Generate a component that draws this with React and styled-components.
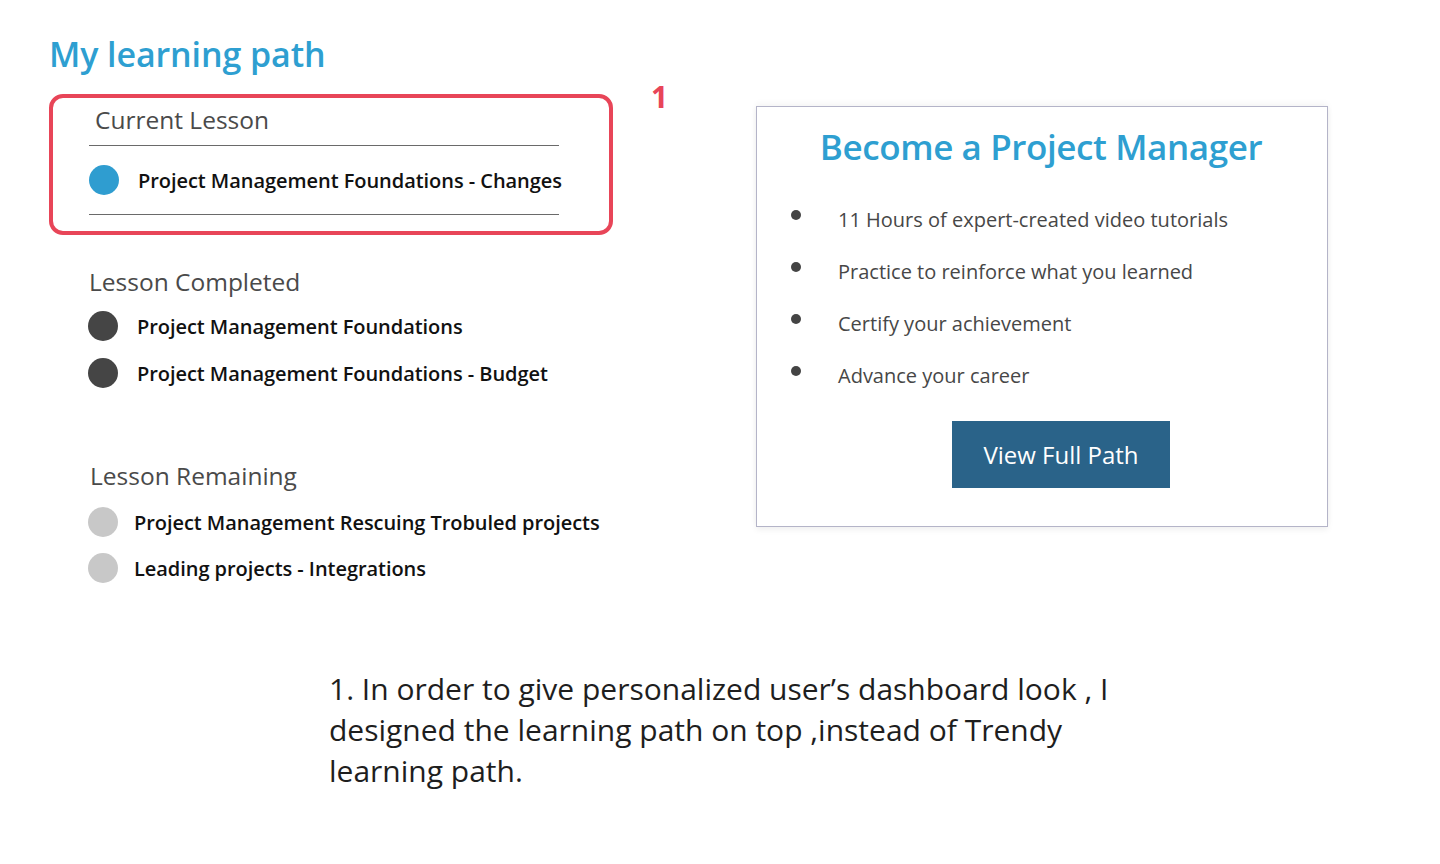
import styled, { createGlobalStyle } from "styled-components";

const GlobalStyle = createGlobalStyle`
  body {
    margin: 0;
    background: #fff;
    font-family: "Open Sans", "Noto Sans", sans-serif;
  }
`;

const Page = styled.div`
  width: 1440px;
  height: 864px;
  padding: 32px 0 0 49px;
  box-sizing: border-box;
`;

const MainRow = styled.div`
  display: flex;
  align-items: flex-start;
`;

const LeftColumn = styled.div`
  width: 564px;
  display: flex;
  flex-direction: column;
`;

const PageTitle = styled.h1`
  margin: 0;
  font-size: 34px;
  line-height: 44px;
  font-weight: 600;
  letter-spacing: -0.1px;
  color: #2e9fd1;
`;

const CurrentBox = styled.div`
  margin-top: 18px;
  border: 4px solid #e84558;
  border-radius: 14px;
  padding: 8px 0 16px 36px;
  display: flex;
  flex-direction: column;
`;

const SectionHeading = styled.h2`
  margin: 0;
  padding-left: ${(p) => p.$indent || 0}px;
  font-size: 24.5px;
  line-height: 28px;
  font-weight: 400;
  color: #4a4a4a;
`;

const Rule = styled.div`
  width: 470px;
  height: 1px;
  background: #6a6a6a;
  margin: ${(p) => p.$margin};
`;

const Section = styled.div`
  padding-left: 39px;
  display: flex;
  flex-direction: column;
  margin-top: ${(p) => p.$top}px;
`;

const LessonRow = styled.div`
  display: flex;
  align-items: center;
  height: 40px;
  gap: ${(p) => p.$gap || 19}px;
  margin-top: ${(p) => p.$top || 0}px;
`;

const Dot = styled.span`
  width: 30px;
  height: 30px;
  border-radius: 50%;
  flex: none;
  background: ${(p) =>
    p.$state === "current" ? "#2f9dd0" : p.$state === "done" ? "#454545" : "#c8c8c8"};
`;

const LessonName = styled.span`
  font-size: 20px;
  font-weight: 600;
  color: #111;
  letter-spacing: -0.05px;
`;

const Marker = styled.div`
  margin: 47px 0 0 38px;
  width: 16px;
  font-size: 30px;
  line-height: 36px;
  font-weight: 700;
  color: #e84558;
`;

const Card = styled.div`
  margin: 74px 0 0 89px;
  width: 572px;
  height: 421px;
  box-sizing: border-box;
  border: 1px solid #b4b4c8;
  box-shadow: 0 3px 6px rgba(0, 0, 0, 0.06), 0 -3px 6px rgba(0, 0, 0, 0.04);
  padding: 18px 0 0 34px;
  display: flex;
  flex-direction: column;
`;

const CardTitle = styled.h2`
  margin: 0 0 0 -36px;
  text-align: center;
  font-size: 35px;
  line-height: 44px;
  font-weight: 600;
  letter-spacing: -0.4px;
  color: #2e9fd1;
`;

const Perks = styled.ul`
  list-style: none;
  margin: 24px 0 0;
  padding: 0;
`;

const Perk = styled.li`
  height: 52px;
  display: flex;
  align-items: center;
  gap: 37px;
  font-size: 20px;
  color: #474747;

  &::before {
    content: "";
    width: 10px;
    height: 10px;
    border-radius: 50%;
    background: #444;
    margin-top: -8px;
    flex: none;
  }
`;

const PathButton = styled.button`
  margin: 20px 0 0 161px;
  width: 218px;
  height: 67px;
  border: none;
  background: #2a6389;
  color: #fff;
  font-family: inherit;
  font-size: 24px;
  cursor: pointer;
`;

const Note = styled.p`
  margin: 80px 0 0 280px;
  width: 800px;
  font-size: 30px;
  line-height: 41px;
  color: #1e1e1e;
`;

const completed = ["Project Management Foundations", "Project Management Foundations - Budget"];
const remaining = ["Project Management Rescuing Trobuled projects", "Leading projects - Integrations"];
const perks = [
  "11 Hours of expert-created video tutorials",
  "Practice to reinforce what you learned",
  "Certify your achievement",
  "Advance your career",
];

export default function App() {
  return (
    <>
      <GlobalStyle />
      <Page>
        <MainRow>
          <LeftColumn>
            <PageTitle>My learning path</PageTitle>
            <CurrentBox>
              <SectionHeading $indent={6}>Current Lesson</SectionHeading>
              <Rule $margin="11px 0 0" />
              <LessonRow $top={14}>
                <Dot $state="current" />
                <LessonName>Project Management Foundations - Changes</LessonName>
              </LessonRow>
              <Rule $margin="14px 0 0" />
            </CurrentBox>

            <Section $top={33}>
              <SectionHeading $indent={1}>Lesson Completed</SectionHeading>
              {completed.map((name, i) => (
                <LessonRow key={name} $top={i === 0 ? 10 : 7}>
                  <Dot $state="done" />
                  <LessonName>{name}</LessonName>
                </LessonRow>
              ))}
            </Section>

            <Section $top={69}>
              <SectionHeading $indent={2}>Lesson Remaining</SectionHeading>
              {remaining.map((name, i) => (
                <LessonRow key={name} $gap={16} $top={i === 0 ? 12 : 6}>
                  <Dot $state="todo" />
                  <LessonName>{name}</LessonName>
                </LessonRow>
              ))}
            </Section>
          </LeftColumn>

          <Marker>1</Marker>

          <Card>
            <CardTitle>Become a Project Manager</CardTitle>
            <Perks>
              {perks.map((p) => (
                <Perk key={p}>{p}</Perk>
              ))}
            </Perks>
            <PathButton>View Full Path</PathButton>
          </Card>
        </MainRow>

        <Note>
          1. In order to give personalized user’s dashboard look , I designed the learning path on top
          ,instead of Trendy learning path.
        </Note>
      </Page>
    </>
  );
}
